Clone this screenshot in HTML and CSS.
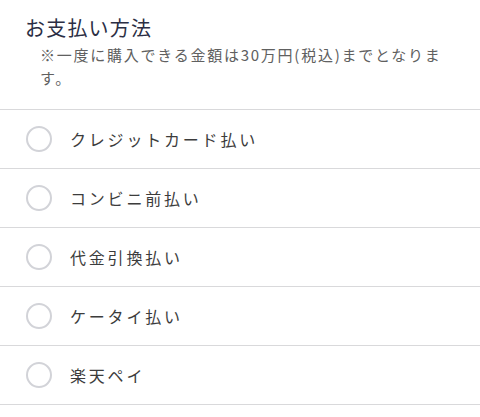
FILE: index.html
```html
<!DOCTYPE html>
<html lang="ja">
<head>
<meta charset="utf-8">
<link rel="stylesheet" href="styles.css">
</head>
<body>
<section class="payment">
  <header class="payment-head">
    <h2 class="payment-title">お支払い方法</h2>
    <p class="payment-note">※一度に購入できる金額は30万円(税込)までとなります。</p>
  </header>
  <ul class="payment-list">
    <li class="payment-item"><span class="radio"></span><span class="label">クレジットカード払い</span></li>
    <li class="payment-item"><span class="radio"></span><span class="label">コンビニ前払い</span></li>
    <li class="payment-item"><span class="radio"></span><span class="label">代金引換払い</span></li>
    <li class="payment-item"><span class="radio"></span><span class="label">ケータイ払い</span></li>
    <li class="payment-item"><span class="radio"></span><span class="label">楽天ペイ</span></li>
  </ul>
</section>
</body>
</html>
```

FILE: styles.css
```css
html, body {
  margin: 0;
  padding: 0;
  background: #ffffff;
}

body {
  font-family: "Noto Sans CJK JP", "Noto Sans", sans-serif;
}

.payment-head {
  padding: 13px 25px 20px 25px;
}

.payment-title {
  margin: 0;
  font-size: 20px;
  line-height: 30px;
  font-weight: 400;
  letter-spacing: 1.2px;
  color: #2b2e44;
}

.payment-note {
  margin: 0 0 0 15px;
  font-size: 15px;
  line-height: 23px;
  letter-spacing: 1.75px;
  color: #606060;
}

.payment-list {
  list-style: none;
  margin: 0;
  padding: 0;
  border-top: 1px solid #d9d9db;
}

.payment-item {
  display: flex;
  align-items: center;
  gap: 18px;
  height: 58px;
  padding-left: 26px;
  border-bottom: 1px solid #d9d9db;
}

.radio {
  box-sizing: border-box;
  width: 26px;
  height: 26px;
  border: 2px solid #d2d3d8;
  border-radius: 50%;
  flex: none;
}

.label {
  font-size: 16px;
  letter-spacing: 2.8px;
  color: #3c3c3c;
}
```
